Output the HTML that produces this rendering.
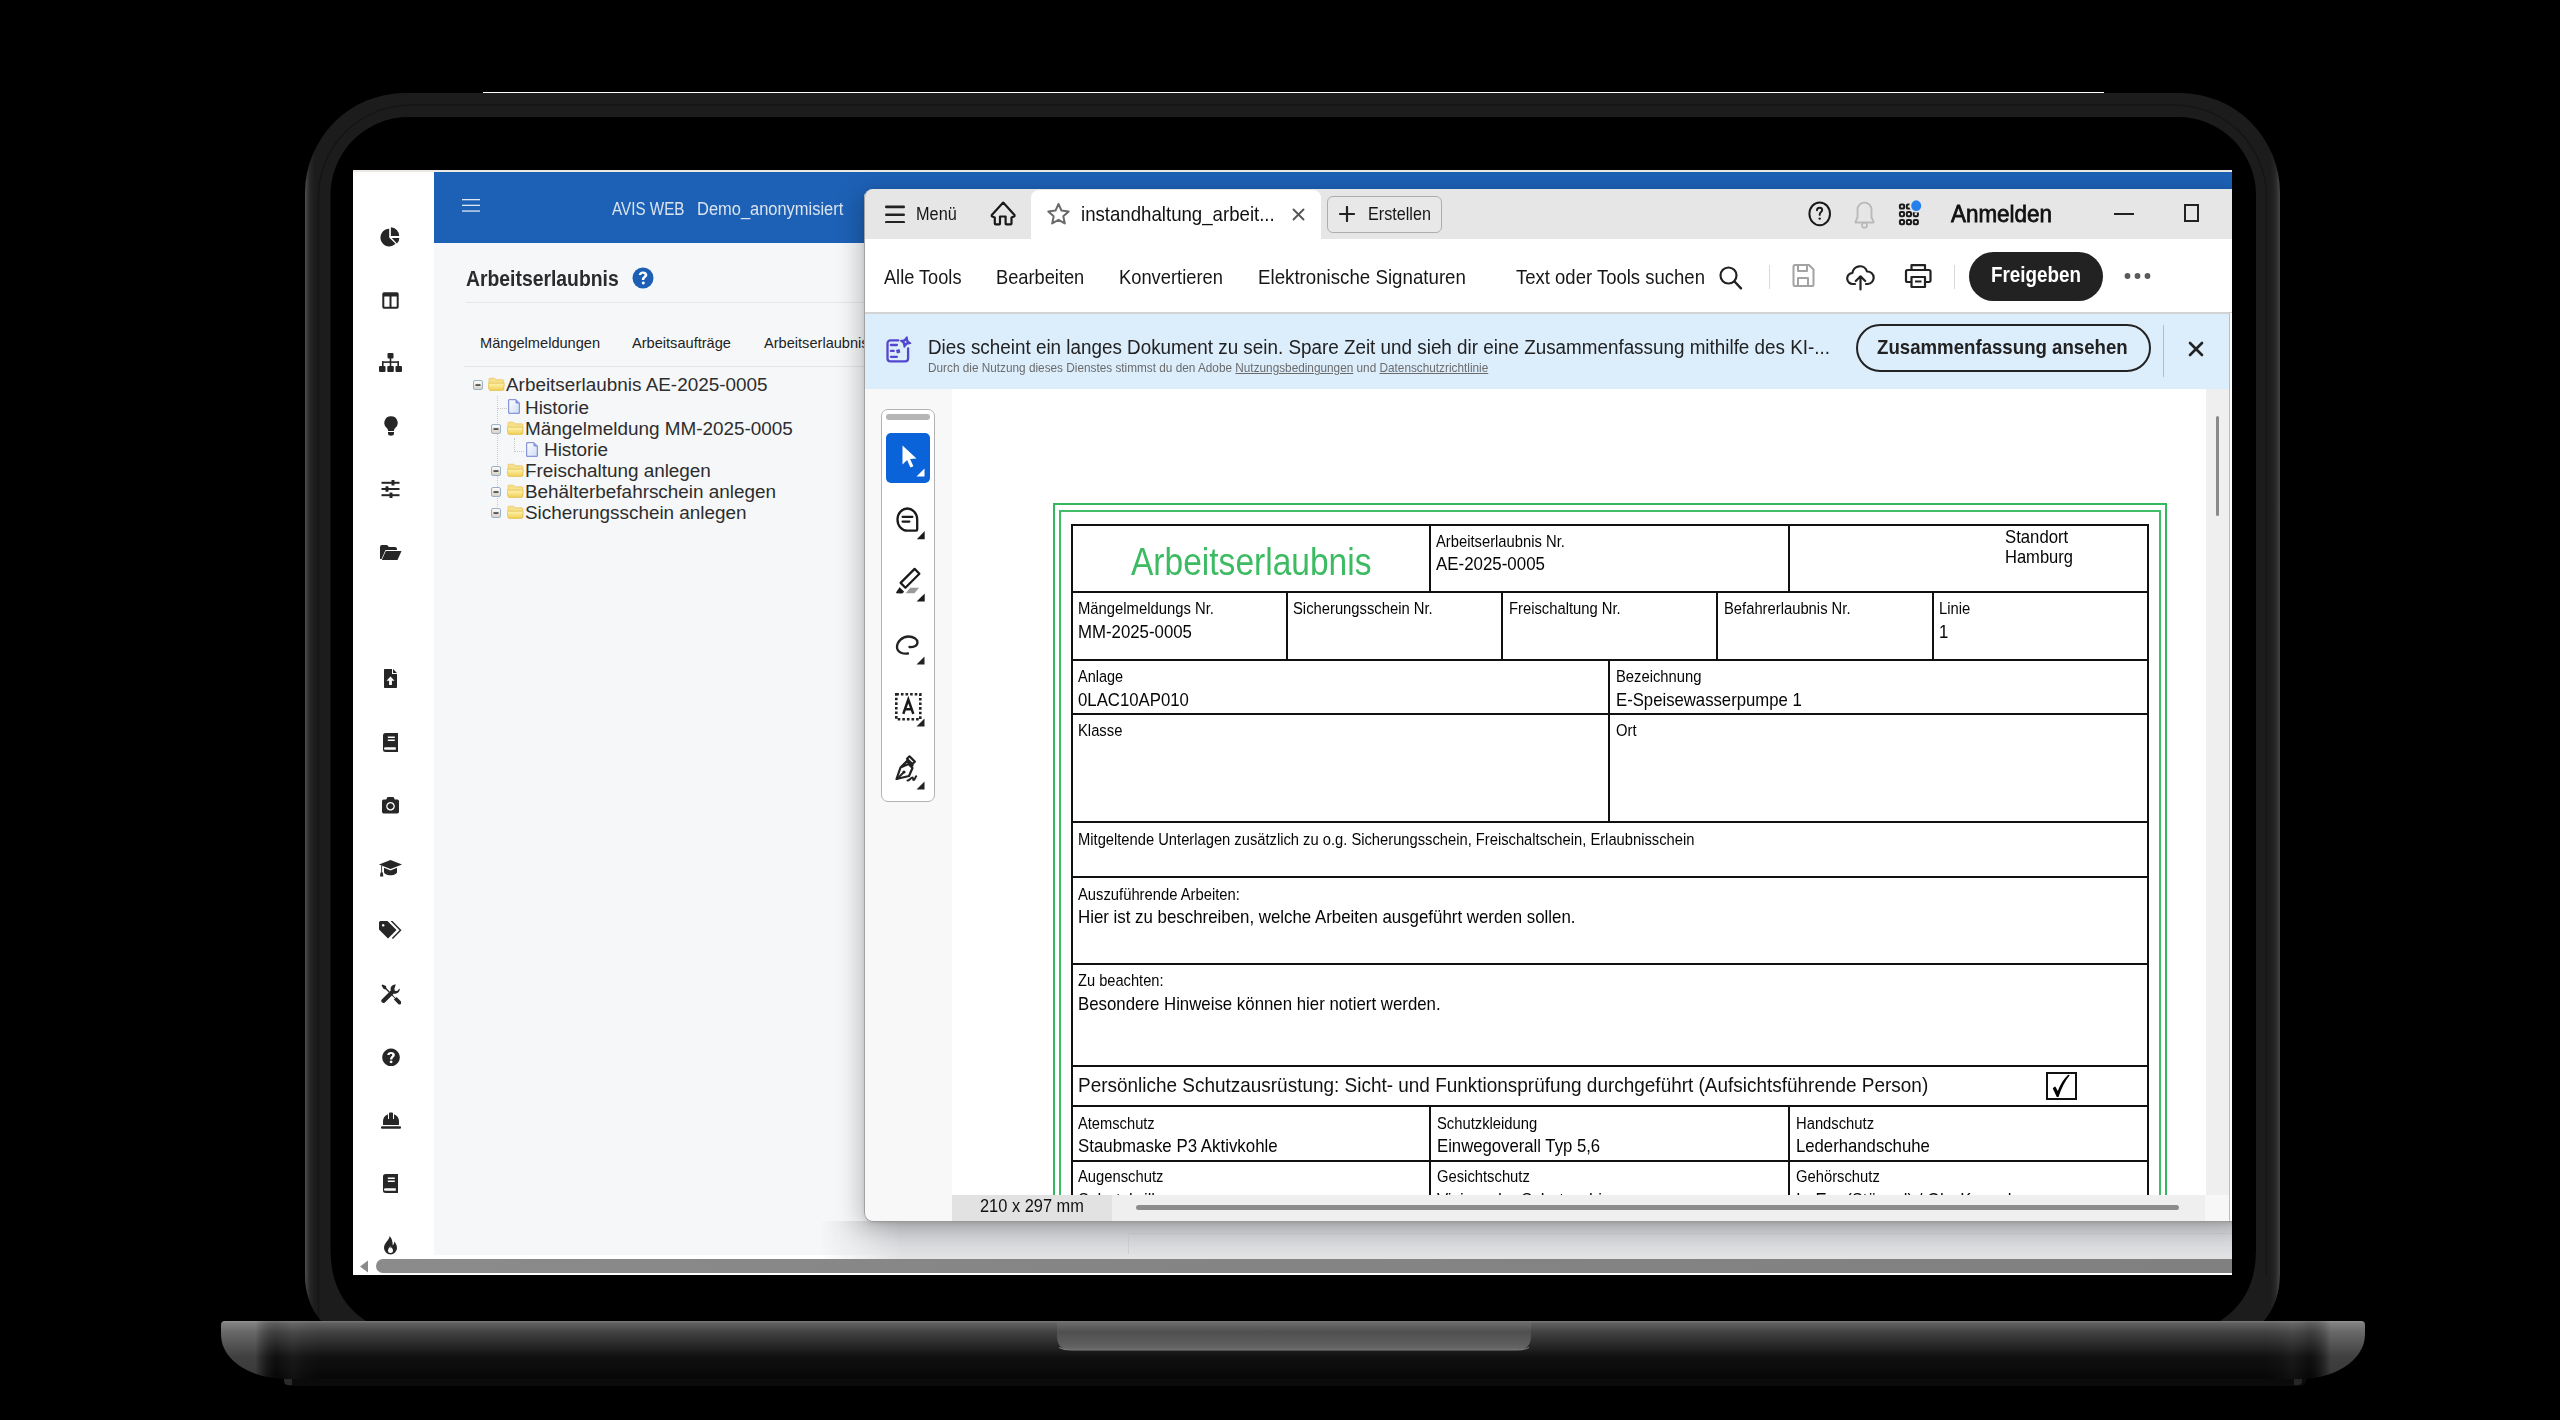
<!DOCTYPE html>
<html><head><meta charset="utf-8">
<style>
*{box-sizing:border-box;margin:0;padding:0}
html,body{width:2560px;height:1420px;overflow:hidden;background:#000}
body{position:relative;font-family:"Liberation Sans",sans-serif;color:#222}
.a{position:absolute}
.t{position:absolute;white-space:nowrap;line-height:1}
/* laptop */
/* screen */
#screen{left:0;top:0;width:2560px;height:1420px;clip-path:inset(170px 328px 145px 353px)}

/* AVIS */
#sidebar{left:353px;top:170px;width:81px;height:1090px;background:#fff}
#hdr{left:434px;top:170px;width:1800px;height:73px;background:#1d61b6}
#pane{left:434px;top:243px;width:1800px;height:1020px;background:#f6f7f9}
.ic{position:absolute;fill:#262626}
#hscroll{left:353px;top:1255px;width:1879px;height:20px;background:#fff}

/* acrobat */
#acro{left:864px;top:189px;width:1380px;height:1032px;border-radius:9px 0 0 9px;background:#fff;overflow:hidden}
.ai{position:absolute;fill:none;stroke:#222;stroke-width:2;stroke-linecap:round;stroke-linejoin:round}
</style></head>
<body>
<svg width="0" height="0" style="position:absolute"><defs>
<linearGradient id="fg" x1="0" y1="0" x2="0" y2="1"><stop offset="0" stop-color="#fff3b0"/><stop offset="1" stop-color="#f2cf55"/></linearGradient>
<linearGradient id="dg" x1="0" y1="0" x2="1" y2="1"><stop offset="0" stop-color="#ffffff"/><stop offset="1" stop-color="#cfdcf5"/></linearGradient>
<linearGradient id="mg" x1="0" y1="0" x2="0" y2="1"><stop offset="0" stop-color="#ffffff"/><stop offset="1" stop-color="#d6d0c4"/></linearGradient>
<symbol id="minus" viewBox="0 0 10 10"><rect x=".5" y=".5" width="9" height="9" rx="1.5" fill="url(#mg)" stroke="#9ab0c4"/><rect x="2.5" y="4.3" width="5" height="1.5" fill="#333"/></symbol>
<symbol id="folder" viewBox="0 0 17 14"><path d="M2 1.2h4.6l1.6 1.6h6.6a1 1 0 0 1 1 1v9H2a1 1 0 0 1-1-1V2.2a1 1 0 0 1 1-1z" fill="#f7e08a" stroke="#e6c25a" stroke-width=".7"/><path d="M.6 6.2H15.6a.6.6 0 0 1 .6.7L15.4 12.6a1 1 0 0 1-1 .8H2.2a1 1 0 0 1-1-.8L.1 6.9a.6.6 0 0 1 .5-.7z" fill="url(#fg)" stroke="#e3bd4e" stroke-width=".7"/></symbol>
<symbol id="doc" viewBox="0 0 12 15"><path d="M.7 .7h7.3l3.3 3.3v10.3H.7z" fill="url(#dg)" stroke="#6f7fcf" stroke-width="1"/><path d="M8 .7v3.3h3.3" fill="#8fa0e0" stroke="#6f7fcf" stroke-width=".8"/></symbol>
</defs></svg>
<svg class="a" style="left:0;top:0" width="2560" height="1420" viewBox="0 0 2560 1420">
<defs>
<linearGradient id="lidg" x1="0" y1="0" x2="1" y2="0">
<stop offset="0" stop-color="#505050"/><stop offset=".001" stop-color="#3c3c3c"/><stop offset=".0025" stop-color="#262626"/><stop offset=".005" stop-color="#1c1c1c"/>
<stop offset=".995" stop-color="#1c1c1c"/><stop offset=".9975" stop-color="#262626"/><stop offset=".999" stop-color="#383838"/><stop offset="1" stop-color="#444"/></linearGradient>
<linearGradient id="baseg" x1="0" y1="0" x2="0" y2="1">
<stop offset="0" stop-color="#7a7a7a"/><stop offset=".04" stop-color="#606060"/><stop offset=".2" stop-color="#414141"/><stop offset=".45" stop-color="#242424"/><stop offset=".62" stop-color="#101010"/><stop offset="1" stop-color="#070707"/></linearGradient>
<linearGradient id="baseh" x1="0" y1="0" x2="1" y2="0">
<stop offset="0" stop-color="#fff" stop-opacity=".2"/><stop offset=".016" stop-color="#fff" stop-opacity=".2"/><stop offset=".026" stop-color="#000" stop-opacity=".05"/><stop offset=".034" stop-color="#fff" stop-opacity=".04"/><stop offset=".05" stop-color="#000" stop-opacity="0"/>
<stop offset=".95" stop-color="#000" stop-opacity="0"/><stop offset=".966" stop-color="#fff" stop-opacity=".04"/><stop offset=".974" stop-color="#000" stop-opacity=".05"/><stop offset=".984" stop-color="#fff" stop-opacity=".2"/><stop offset="1" stop-color="#fff" stop-opacity=".2"/></linearGradient>
<linearGradient id="notchg" x1="0" y1="0" x2="0" y2="1"><stop offset="0" stop-color="#6e6e6e"/><stop offset=".35" stop-color="#4f4f4f"/><stop offset=".8" stop-color="#5e5e5e"/><stop offset="1" stop-color="#6a6a6a"/></linearGradient>
</defs>
<rect x="483" y="92" width="1621" height="1.2" fill="#fff"/>
<path d="M305 1321V193A100 100 0 0 1 405 93H2180A100 100 0 0 1 2280 193V1275Q2280 1302 2264 1321Z" fill="url(#lidg)"/>
<path d="M318.5 1321V199A92 92 0 0 1 410.5 105H2174.5A92 92 0 0 1 2266.5 199V1275" fill="none" stroke="#131313" stroke-width="1.5" opacity=".7"/>
<path d="M305 1275Q305 1302 321 1321" fill="none" stroke="#000" stroke-width="0"/>
<path d="M330.5 1321V195A78 78 0 0 1 408.5 117H2178A78 78 0 0 1 2256 195V1250Q2256 1298 2220 1321H366Q330.5 1298 330.5 1250Z" fill="#000"/>
<path d="M305 1250V1275Q305 1302 321 1321H300V1250Z" fill="#000"/>
<path d="M2280 1250V1275Q2280 1302 2264 1321H2290V1250Z" fill="#000"/>
<path d="M286 1370H2300a6 6 0 0 1 6 6v4a6 6 0 0 1-6 6H290a6 6 0 0 1-6-6z" fill="#0b0b0b"/>
<path d="M284 1372h8v13h-4a4 4 0 0 1-4-4z" fill="#2a2a2a"/>
<path d="M2302 1372h-8v13h4a4 4 0 0 0 4-4z" fill="#262626"/>
<path d="M225 1321H2361Q2365 1321 2365 1325V1334C2365 1362 2332 1379 2300 1379H286C254 1379 221 1362 221 1334V1325Q221 1321 225 1321Z" fill="url(#baseg)"/>
<path d="M225 1321H2361Q2365 1321 2365 1325V1334C2365 1362 2332 1379 2300 1379H286C254 1379 221 1362 221 1334V1325Q221 1321 225 1321Z" fill="url(#baseh)"/>
<path d="M1057 1322H1531V1336Q1531 1350 1517 1350H1071Q1057 1350 1057 1336Z" fill="url(#notchg)"/>
<path d="M1059 1347.5Q1064 1350 1071 1350H1517Q1524 1350 1529 1347.5" fill="none" stroke="#7a7a7a" stroke-width="1.2"/>
</svg>

<div id="screen" class="a">

<div id="sidebar" class="a"></div>
<div id="hdr" class="a"></div>
<div id="pane" class="a"></div>
<!-- sidebar icons -->
<svg class="ic" style="left:376px;top:222px" width="30" height="30" viewBox="0 0 30 30"><path d="M13.2 15.6V6.8A8.8 8.8 0 1 0 19.5 21.8Z"/><path d="M14.9 13.9V5.2A8.7 8.7 0 0 1 23.2 13.9Z"/><path d="M15.8 15.9H23.3A8 8 0 0 1 21 21.5Z"/></svg>
<svg class="ic" style="left:382px;top:291.5px" width="17" height="17" viewBox="0 0 17 17"><path d="M2 0.3h13A1.7 1.7 0 0 1 16.7 2v13A1.7 1.7 0 0 1 15 16.7H2A1.7 1.7 0 0 1 .3 15V2A1.7 1.7 0 0 1 2 .3z M2.3 4.6v10.1h5.2V4.6z M9.5 4.6v10.1h5.2V4.6z" fill-rule="evenodd"/></svg>
<svg class="ic" style="left:379px;top:353px" width="23" height="20" viewBox="0 0 23 20"><rect x="8.5" y="0" width="6" height="5.5" rx="1"/><rect x="10.7" y="5" width="1.6" height="4"/><rect x="3" y="8.3" width="17" height="1.6"/><rect x="3" y="8.3" width="1.6" height="5"/><rect x="18.4" y="8.3" width="1.6" height="5"/><rect x="10.7" y="8.3" width="1.6" height="5"/><rect x="0" y="13" width="6.5" height="6" rx="1"/><rect x="8.3" y="13" width="6.5" height="6" rx="1"/><rect x="16.5" y="13" width="6.5" height="6" rx="1"/></svg>
<svg class="ic" style="left:384px;top:416px" width="14" height="20" viewBox="0 0 14 20"><path d="M7 0.3A6.6 6.6 0 0 0 3 12.2c.6.6 1 1.5 1 2.3V15h6v-.5c0-.8.4-1.7 1-2.3A6.6 6.6 0 0 0 7 .3z"/><path d="M4 16h6v1.5c0 1.3-1.3 2.3-3 2.3s-3-1-3-2.3z"/></svg>
<svg class="ic" style="left:381px;top:480px" width="19" height="18" viewBox="0 0 19 18"><rect x="0.5" y="1.8" width="18" height="2"/><rect x="0.5" y="8" width="18" height="2"/><rect x="0.5" y="14.2" width="18" height="2"/><rect x="10.5" y="0" width="3" height="5.6" rx=".6"/><rect x="4.5" y="6.2" width="3" height="5.6" rx=".6"/><rect x="8.5" y="12.4" width="3" height="5.6" rx=".6"/></svg>
<svg class="ic" style="left:380px;top:545px" width="22" height="15" viewBox="0 0 22 15"><path d="M0 2a2 2 0 0 1 2-2h5l2 2h6a2 2 0 0 1 2 2v1H5.5L1.5 14H0z"/><path d="M5.8 6H21.5l-4 9H1.8z"/></svg>
<svg class="ic" style="left:384px;top:669px" width="13" height="19" viewBox="0 0 13 19"><path d="M0 .8A.8.8 0 0 1 .8 0H8v5h5v13.2a.8.8 0 0 1-.8.8H.8a.8.8 0 0 1-.8-.8z M9 0l4 4H9z M6.5 7.5l-4 4.2h2.6V16h2.8v-4.3h2.6z" fill-rule="evenodd"/></svg>
<svg class="ic" style="left:383px;top:732.5px" width="15" height="19" viewBox="0 0 15 19"><path d="M2.5 0H15v19H2.5A2.5 2.5 0 0 1 0 16.5v-14A2.5 2.5 0 0 1 2.5 0z M2.3 14.2a1.2 1.2 0 0 0 0 2.6h10.5v-2.6z M4.8 3.4v1.5h7V3.4z M4.8 6.4v1.5h7V6.4z" fill-rule="evenodd"/></svg>
<svg class="ic" style="left:382px;top:797px" width="17" height="16.5" viewBox="0 0 17 16.5"><path d="M5.5 0h6l1.3 2.5H15.3A1.7 1.7 0 0 1 17 4.2v10.6a1.7 1.7 0 0 1-1.7 1.7H1.7A1.7 1.7 0 0 1 0 14.8V4.2A1.7 1.7 0 0 1 1.7 2.5h2.5z M8.5 5a4.3 4.3 0 1 0 .01 0z M8.5 6.3a3 3 0 1 1-.01 0z" fill-rule="evenodd"/></svg>
<svg class="ic" style="left:379px;top:860px" width="23" height="17" viewBox="0 0 23 17"><path d="M11.5 0L23 4.5l-11.5 4.5L0 4.5z"/><path d="M5 7.8v4.2c0 1.8 3 3.2 6.5 3.2s6.5-1.4 6.5-3.2V7.8l-6.5 2.6z"/><path d="M2.2 5.5h.9v7.5h-.9z"/><path d="M1.5 12.5h2.3l.5 4h-3.3z"/></svg>
<svg class="ic" style="left:379px;top:921px" width="23" height="21" viewBox="0 0 23 21"><path d="M0 1.5A1.5 1.5 0 0 1 1.5 0h7l9 9-8.5 8.5-9-9z M4.2 3a1.3 1.3 0 1 0 0.01 0z" fill-rule="evenodd"/><path d="M11.5 0h2l9 9.3-8.6 8.6-1-1 7.6-7.6z"/></svg>
<svg class="ic" style="left:381px;top:984px" width="20" height="21" viewBox="0 0 20 21"><path d="M1.5 0.5L0.5 1.5l2.2 3.6 2 .3 9.2 9.2-1 1 4.3 4.3a1.8 1.8 0 0 0 2.6-2.6l-4.3-4.3-1 1L5.3 3.9 5 2z"/><path d="M14.8 0.6a4.5 4.5 0 0 0-5 5.8L0.8 15.4a2.2 2.2 0 0 0 3.1 3.1l9-9a4.5 4.5 0 0 0 5.8-5l-2.6 2.6-2.4-.3-.3-2.4z"/></svg>
<svg class="ic" style="left:382px;top:1048px" width="18" height="19" viewBox="0 0 18 19"><path d="M9 0.5a8.8 8.8 0 1 0 0.01 0z M9 4c-2.1 0-3.6 1.2-3.8 3.1h2.4c.1-.7.6-1.1 1.4-1.1.8 0 1.3.5 1.3 1.1 0 1.3-2.2 1.4-2.2 3.8v.5h2.3v-.3c0-1.7 2.5-1.9 2.5-4.1C12.9 5.1 11.2 4 9 4z M9.1 12.5a1.4 1.4 0 1 0 0.01 0z" fill-rule="evenodd"/></svg>
<svg class="ic" style="left:381px;top:1112px" width="20" height="17" viewBox="0 0 20 17"><path d="M8 1.5v5.5H7V2.2A7.8 7.8 0 0 0 2 9.5V13h16V9.5a7.8 7.8 0 0 0-5-7.3V7h-1V1.5a1 1 0 0 0-1-1H9a1 1 0 0 0-1 1z"/><rect x="0" y="14.3" width="20" height="2.4" rx="1"/></svg>
<svg class="ic" style="left:383px;top:1174px" width="15" height="19" viewBox="0 0 15 19"><path d="M2.5 0H15v19H2.5A2.5 2.5 0 0 1 0 16.5v-14A2.5 2.5 0 0 1 2.5 0z M2.3 14.2a1.2 1.2 0 0 0 0 2.6h10.5v-2.6z M4.8 3.4v1.5h7V3.4z M4.8 6.4v1.5h7V6.4z" fill-rule="evenodd"/></svg>
<svg class="ic" style="left:383px;top:1236px" width="15" height="19" viewBox="0 0 15 19"><path d="M6.5 0C7 3.5 1 6.5 1 12a6.5 6.5 0 0 0 13 0c0-3-1.5-5.2-3-6.5.2 2-.3 3.3-1.3 3.8C9.8 5.5 8.8 2 6.5 0z M7.5 10c-.6 1.5-2.5 2.5-2.5 4.5a2.5 2.5 0 0 0 5 0c0-1.5-1-2.5-1.4-3.3-.3.7-.7 1-1.1 1.1z" fill-rule="evenodd"/></svg>
<!-- header -->
<svg class="a" style="left:462px;top:198px" width="18" height="15" viewBox="0 0 18 15"><rect x="0" y="1" width="18" height="1.3" fill="#dfe7f3"/><rect x="0" y="6.7" width="18" height="1.3" fill="#dfe7f3"/><rect x="0" y="12.4" width="18" height="1.3" fill="#dfe7f3"/></svg>
<div class="t" style="left:612px;top:201px;font-size:17.5px;color:#dbe3ee;transform:scaleX(.87);transform-origin:0 0">AVIS WEB</div>
<div class="t" style="left:697px;top:201px;font-size:17.5px;color:#dbe3ee;transform:scaleX(.94);transform-origin:0 0">Demo_anonymisiert</div>
<!-- pane -->
<div class="t" style="left:466px;top:269px;font-size:21.5px;font-weight:bold;color:#2b2b2b;transform:scaleX(.9);transform-origin:0 0">Arbeitserlaubnis</div>
<svg class="a" style="left:632px;top:267px" width="22" height="22" viewBox="0 0 22 22"><circle cx="11" cy="11" r="10.5" fill="#1c5fb5"/><path d="M11 4.5c-2.4 0-4 1.4-4.2 3.5h2.5c.1-.8.7-1.3 1.6-1.3 1 0 1.6.6 1.6 1.3 0 1.5-2.6 1.7-2.6 4.4v.6h2.5v-.4c0-1.9 2.9-2.2 2.9-4.7 0-2.1-1.8-3.4-4.3-3.4z M11.3 14.6a1.5 1.5 0 1 0 .01 0z" fill="#fff" fill-rule="evenodd"/></svg>
<div class="a" style="left:466px;top:302px;width:400px;height:1px;background:#e6e7ea"></div>
<div class="t" style="left:480px;top:336px;font-size:14.6px;color:#222">Mängelmeldungen</div>
<div class="t" style="left:632px;top:336px;font-size:14.6px;color:#222">Arbeitsaufträge</div>
<div class="t" style="left:764px;top:336px;font-size:14.6px;color:#222">Arbeitserlaubnis</div>
<div class="a" style="left:464px;top:366px;width:400px;height:1px;background:#e3e4e7"></div>

<div class="a" style="left:353px;top:170px;width:1879px;height:2px;background:#ece9e5"></div>
<!-- below-window background bits -->
<div class="a" style="left:353px;top:1255px;width:1879px;height:20px;background:#fff"></div>
<div class="a" style="left:820px;top:1221px;width:1412px;height:38px;background:linear-gradient(#c6c7ca,#d5d6d9 45%,#dfe0e2 85%,#e3e3e5);-webkit-mask-image:linear-gradient(90deg,transparent 0,#000 80px)"></div>
<div class="a" style="left:1128px;top:1233px;width:1110px;height:1px;background:#c9cacd"></div>
<div class="a" style="left:1128px;top:1233px;width:1px;height:21px;background:#cdcecf"></div>
<div class="a" style="left:864px;top:189px;width:1380px;height:1033px;border-radius:9px 0 0 9px;box-shadow:-5px 4px 24px rgba(0,0,0,.22), 0 1px 4px rgba(0,0,0,.1)"></div>
<div id="acro" class="a">
<div class="a" style="left:0.0px;top:0.0px;width:1380.0px;height:50.0px;background:#e6e6e6"></div>
<div class="a" style="left:166.5px;top:0.5px;width:290.0px;height:49.5px;background:#fff;border-radius:8px 8px 0 0"></div>
<svg class="a" style="left:21.0px;top:16.0px;" width="20" height="18" viewBox="0 0 20 18"><g fill="#222"><rect x="0" y="0.6" width="20" height="2.6" rx="1.3"/><rect x="0" y="8.4" width="20" height="2.6" rx="1.3"/><rect x="0" y="16.1" width="20" height="2.6" rx="1.3"/></g></svg>
<div class="t" style="left:52.4px;top:15.0px;font-size:19.14px;color:#161616;transform:scaleX(0.8520);transform-origin:0 0;">Menü</div>
<svg class="a" style="left:116.0px;top:6.0px;" width="40" height="40" viewBox="0 0 40 40"><path d="M23.2 7.6L11.8 19.9Q11.3 20.9 12.3 21.6L14.8 22.6V28.5Q14.8 29.4 15.7 29.4H19.3Q20 29.4 20 28.6V21.5H25.6V28.6Q25.6 29.4 26.3 29.4H30.6Q31.5 29.4 31.5 28.5V22.6L34 21.6Q35 20.9 34.5 19.9Z" fill="none" stroke="#1a1a1a" stroke-width="2.2" stroke-linejoin="round"/></svg>
<svg class="a" style="left:182.0px;top:13.0px;" width="25" height="24" viewBox="0 0 25 24"><path d="M12.5 2l3 6.6 7.2.8-5.4 4.9 1.5 7.1-6.3-3.6-6.3 3.6 1.5-7.1-5.4-4.9 7.2-.8z" fill="none" stroke="#6a6a6a" stroke-width="2" stroke-linejoin="round"/></svg>
<div class="t" style="left:216.7px;top:14.8px;font-size:20.86px;color:#111;transform:scaleX(0.8933);transform-origin:0 0;">instandhaltung_arbeit...</div>
<svg class="a" style="left:428.0px;top:19.0px;" width="13" height="13" viewBox="0 0 13 13"><path d="M1.5 1.5l10 10M11.5 1.5l-10 10" stroke="#555" stroke-width="1.9" stroke-linecap="round"/></svg>
<div class="a" style="left:462.5px;top:7.0px;width:115.0px;height:36.5px;border:1.6px solid #adadad;border-radius:6px;background:#e8e8e8"></div>
<svg class="a" style="left:475.0px;top:17.0px;" width="16" height="16" viewBox="0 0 16 16"><path d="M8 1v14M1 8h14" stroke="#222" stroke-width="2.2" stroke-linecap="round"/></svg>
<div class="t" style="left:504.4px;top:15.0px;font-size:19.14px;color:#161616;transform:scaleX(0.8459);transform-origin:0 0;">Erstellen</div>
<svg class="a" style="left:942.0px;top:10.0px;" width="28" height="30" viewBox="0 0 28 30"><ellipse cx="13.7" cy="14.8" rx="10.3" ry="11.4" fill="none" stroke="#1a1a1a" stroke-width="2"/><path d="M11 11.3c0-1.6 1.1-2.6 2.6-2.6s2.6 1 2.6 2.4c0 1.9-2.5 2-2.5 4.3v.5" fill="none" stroke="#1a1a1a" stroke-width="1.9" stroke-linecap="round"/><circle cx="13.7" cy="19.6" r="1.2" fill="#1a1a1a"/></svg>
<svg class="a" style="left:988.0px;top:11.0px;" width="25" height="30" viewBox="0 0 25 30"><path d="M3.5 22.5H21.5V21.6L19.5 17.5V9.6A7 7 0 0 0 5.5 9.6V17.5L3.5 21.6Z" fill="none" stroke="#bababa" stroke-width="1.9" stroke-linejoin="round"/><circle cx="12.5" cy="25.2" r="2.5" fill="none" stroke="#bababa" stroke-width="1.7"/></svg>
<svg class="a" style="left:1033.0px;top:10.0px;" width="28" height="30" viewBox="0 0 28 30"><g fill="none" stroke="#1a1a1a" stroke-width="2"><rect x="2.9" y="5.4" width="4.2" height="4.2" rx="1.2"/><rect x="2.9" y="13.0" width="4.2" height="4.2" rx="1.2"/><rect x="2.9" y="21.1" width="4.2" height="4.2" rx="1.2"/><rect x="9.8" y="5.4" width="4.2" height="4.2" rx="1.2"/><rect x="9.8" y="13.0" width="4.2" height="4.2" rx="1.2"/><rect x="9.8" y="21.1" width="4.2" height="4.2" rx="1.2"/><rect x="16.7" y="13.0" width="4.2" height="4.2" rx="1.2"/><rect x="16.7" y="21.1" width="4.2" height="4.2" rx="1.2"/></g><circle cx="19.2" cy="6.7" r="7" fill="#e6e6e6"/><ellipse cx="19.2" cy="6.7" rx="5" ry="5.4" fill="#2680eb"/></svg>
<div class="t" style="left:1087.4px;top:12.7px;font-size:24.57px;color:#111;transform:scaleX(0.9128);transform-origin:0 0;-webkit-text-stroke:0.8px #111;">Anmelden</div>
<div class="a" style="left:1250.0px;top:24.0px;width:20.0px;height:2.2px;background:#222"></div>
<div class="a" style="left:1319.6px;top:15.4px;width:15.4px;height:18.0px;border:2px solid #222"></div>
<div class="a" style="left:0.0px;top:50.0px;width:1380.0px;height:73.0px;background:#fff"></div>
<div class="a" style="left:0.0px;top:122.5px;width:1380.0px;height:2.0px;background:#d3d3d3"></div>
<div class="t" style="left:20.3px;top:77.6px;font-size:20.43px;color:#161616;transform:scaleX(0.8901);transform-origin:0 0;">Alle Tools</div>
<div class="t" style="left:132.3px;top:77.6px;font-size:20.43px;color:#161616;transform:scaleX(0.8936);transform-origin:0 0;">Bearbeiten</div>
<div class="t" style="left:255.0px;top:77.6px;font-size:20.43px;color:#161616;transform:scaleX(0.8978);transform-origin:0 0;">Konvertieren</div>
<div class="t" style="left:393.6px;top:77.6px;font-size:20.43px;color:#161616;transform:scaleX(0.9158);transform-origin:0 0;">Elektronische Signaturen</div>
<div class="t" style="left:652.2px;top:77.6px;font-size:20.43px;color:#161616;transform:scaleX(0.9061);transform-origin:0 0;">Text oder Tools suchen</div>
<svg class="a" style="left:854.0px;top:76.0px;" width="26" height="26" viewBox="0 0 26 26"><circle cx="10.5" cy="10.5" r="8" fill="none" stroke="#222" stroke-width="2.2"/><path d="M16.5 16.5l6.5 6.8" stroke="#222" stroke-width="2.4" stroke-linecap="round"/></svg>
<div class="a" style="left:905.0px;top:75.5px;width:1.2px;height:24.0px;background:#d9d9d9"></div>
<svg class="a" style="left:927.0px;top:74.0px;" width="26" height="26" viewBox="0 0 26 26"><path d="M2.5 3.5a1.5 1.5 0 0 1 1.5-1.5h14l4.5 4.5v15a1.5 1.5 0 0 1-1.5 1.5H4a1.5 1.5 0 0 1-1.5-1.5z M7 2v6h9V2 M7 23v-8h10v8" fill="none" stroke="#a3a3a3" stroke-width="2" stroke-linejoin="round"/></svg>
<svg class="a" style="left:982.0px;top:74.0px;" width="30" height="29" viewBox="0 0 30 29"><path d="M9 21H7a5.5 5.5 0 0 1-.6-11A7.5 7.5 0 0 1 21 8.5a6.2 6.2 0 0 1 .8 12.5H20 M14.5 26.5V13.5 M9.8 18l4.7-4.7 4.7 4.7" fill="none" stroke="#222" stroke-width="2.2" stroke-linejoin="round" stroke-linecap="round"/></svg>
<svg class="a" style="left:1040.0px;top:73.0px;" width="29" height="28" viewBox="0 0 29 28"><path d="M7.5 8V3.2h13.5V8 M7 20H3.5a1.5 1.5 0 0 1-1.5-1.5v-9A1.5 1.5 0 0 1 3.5 8h21.5a1.5 1.5 0 0 1 1.5 1.5v9A1.5 1.5 0 0 1 25 20h-3.5 M7.5 15h13.5v10H7.5z M11 19.5h6.5" fill="none" stroke="#222" stroke-width="2.2" stroke-linejoin="round"/></svg>
<div class="a" style="left:1089.5px;top:75.5px;width:1.2px;height:24.0px;background:#d9d9d9"></div>
<div class="a" style="left:1104.5px;top:63.0px;width:134.2px;height:49.3px;background:#222;border-radius:25px"></div>
<div class="t" style="left:1126.7px;top:76.0px;font-size:21.43px;font-weight:bold;color:#fff;transform:scaleX(0.8789);transform-origin:0 0;">Freigeben</div>
<svg class="a" style="left:1259.0px;top:82.0px;" width="30" height="10" viewBox="0 0 30 10"><g fill="#5a5a5a"><circle cx="4.5" cy="5" r="2.9"/><circle cx="14.5" cy="5" r="2.9"/><circle cx="24.5" cy="5" r="2.9"/></g></svg>
<div class="a" style="left:0.0px;top:124.5px;width:1380.0px;height:75.5px;background:#dcedfc"></div>
<svg class="a" style="left:14.0px;top:139.0px;" width="40" height="40" viewBox="0 0 40 40"><path d="M20.3 12.4H12.4A2.9 2.9 0 0 0 9.5 15.3V30.5A2.9 2.9 0 0 0 12.4 33.4H27.2A2.9 2.9 0 0 0 30.1 30.5V20.3" fill="none" stroke="#5447cf" stroke-width="2.3" stroke-linecap="round"/><path d="M12.9 17H18.9M12.9 22.9H15.7M12.9 28.8H18.9" stroke="#5447cf" stroke-width="2.3" stroke-linecap="round"/><rect x="18.4" y="21.4" width="3.6" height="3.6" transform="rotate(-15 20.2 23.2)" fill="#5447cf"/><path d="M28.92 9.07 L29.59 12.85 L32.53 15.32 L28.75 15.99 L26.28 18.93 L25.61 15.15 L22.67 12.68 L26.45 12.01Z" fill="#5447cf" stroke="#5447cf" stroke-width="1.6" stroke-linejoin="round"/><circle cx="27.6" cy="13.9" r="0.9" fill="#dcedfc"/></svg>
<div class="t" style="left:63.8px;top:147.8px;font-size:20.00px;color:#222;transform:scaleX(0.9424);transform-origin:0 0;">Dies scheint ein langes Dokument zu sein. Spare Zeit und sieh dir eine Zusammenfassung mithilfe des KI-...</div>
<div class="t" style="left:63.8px;top:172.2px;font-size:13.43px;color:#6b6b6b;transform:scaleX(0.8782);transform-origin:0 0;">Durch die Nutzung dieses Dienstes stimmst du den Adobe <u>Nutzungsbedingungen</u> und <u>Datenschutzrichtlinie</u></div>
<div class="a" style="left:992.0px;top:135.3px;width:294.5px;height:48.2px;border:2.6px solid #222;border-radius:25px"></div>
<div class="t" style="left:1013.0px;top:148.1px;font-size:20.86px;font-weight:bold;color:#222;transform:scaleX(0.8938);transform-origin:0 0;">Zusammenfassung ansehen</div>
<div class="a" style="left:1298.5px;top:136.0px;width:1.2px;height:51.6px;background:#aebdca"></div>
<svg class="a" style="left:1324.0px;top:152.0px;" width="16" height="16" viewBox="0 0 16 16"><path d="M2 2l12 12M14 2L2 14" stroke="#222" stroke-width="2.6" stroke-linecap="round"/></svg>
<div class="a" style="left:0.0px;top:200.0px;width:88.0px;height:805.5px;background:#f8f8f8"></div>
<div class="a" style="left:88.0px;top:200.0px;width:1254.0px;height:805.5px;background:#fff"></div>
<div class="a" style="left:1342.0px;top:200.0px;width:38.0px;height:805.5px;background:#efefef"></div>
<div class="a" style="left:1351.5px;top:227.0px;width:3.8px;height:100.0px;background:#8a8a8a;border-radius:2px"></div>
<div class="a" style="left:0.0px;top:1005.5px;width:1380.0px;height:27.0px;background:#efefef"></div>
<div class="a" style="left:0.0px;top:1005.5px;width:88.0px;height:27.0px;background:#f8f8f8"></div>
<div class="a" style="left:88.0px;top:1005.5px;width:159.5px;height:27.0px;background:#e2e2e2"></div>
<div class="a" style="left:1341.0px;top:1005.5px;width:39.0px;height:27.0px;background:#f7f7f7"></div>
<div class="a" style="left:272.0px;top:1016.0px;width:1043.0px;height:5.0px;background:#8c8c8c;border-radius:3px"></div>
<div class="t" style="left:116.0px;top:1008.7px;font-size:17.43px;color:#111;transform:scaleX(0.9417);transform-origin:0 0;">210 x 297 mm</div>
<div class="a" style="left:16.8px;top:219.5px;width:54.0px;height:393.0px;background:#fff;border:1.5px solid #b3b3b3;border-radius:7px"></div>
<div class="a" style="left:21.8px;top:225.2px;width:44.2px;height:6.0px;background:#b5b5b5;border-radius:3px"></div>
<div class="a" style="left:21.8px;top:243.8px;width:44.2px;height:50.2px;background:#0b63d9;border-radius:5px"></div>
<svg class="a" style="left:36.0px;top:255.0px;" width="18" height="26" viewBox="0 0 18 26"><path d="M2.5 1.5v19l4.6-4.4 3.3 7.5 3-1.3-3.3-7.4 6.4-.4z" fill="#fff"/></svg>
<svg class="a" style="left:52.2px;top:279.0px;" width="9" height="9" viewBox="0 0 9 9"><path d="M8.5 .5v8h-8z" fill="#fff"/></svg>
<svg class="a" style="left:21.0px;top:306.0px;" width="50" height="115" viewBox="0 0 50 115"><path d="M32.2 24.5A9.85 11.1 0 1 0 22.35 35.7H31a1.2 1.2 0 0 0 1.2-1.2Z" fill="none" stroke="#1a1a1a" stroke-width="2.3" stroke-linejoin="round"/><path d="M17.6 21.8H27.4M17.6 26.6H24.4" stroke="#1a1a1a" stroke-width="2.3" stroke-linecap="round"/><path d="M39.7 36V44.2H31.8Z" fill="#1a1a1a"/><path d="M29.6 73.9L34.4 78.7L20.4 92.7L15.6 87.9Z" fill="none" stroke="#1a1a1a" stroke-width="2.2" stroke-linejoin="round"/><path d="M11.2 98.3Q11 97.6 11.6 96.6L14.6 92.2L19 96.6Q18.4 98.4 17 98.4Z" fill="#1a1a1a"/><path d="M20.7 98.2L25.2 92.8H34L29.5 98.2Z" fill="#9a9a9a"/><path d="M39.7 98.5V106.6H31.6Z" fill="#1a1a1a"/></svg>
<svg class="a" style="left:30.0px;top:444.0px;" width="28" height="24" viewBox="0 0 28 24"><path d="M14 20.5C10 21 3 20 3 14c0-5 5-10.5 11.5-10.5 5 0 9 2.5 9 6S19 14.5 15.5 14" fill="none" stroke="#222" stroke-width="2.3" stroke-linecap="round"/></svg>
<svg class="a" style="left:52.2px;top:466.5px;" width="9" height="9" viewBox="0 0 9 9"><path d="M8.5 .5v8h-8z" fill="#222"/></svg>
<svg class="a" style="left:29.0px;top:502.0px;" width="30" height="32" viewBox="0 0 30 32"><rect x="3.3" y="3.3" width="24" height="25" fill="none" stroke="#222" stroke-width="2.6" stroke-dasharray="2.6 2"/><path d="M10.3 22.8l5-14.2 5 14.2 M12 18.2h6.6" fill="none" stroke="#1a1a1a" stroke-width="2.5"/></svg>
<svg class="a" style="left:52.2px;top:529.0px;" width="9" height="9" viewBox="0 0 9 9"><path d="M8.5 .5v8h-8z" fill="#222"/></svg>
<svg class="a" style="left:29.0px;top:566.0px;" width="30" height="32" viewBox="0 0 30 32"><path d="M3.5 24l4-11.5 8-3.5 4 4-3.5 8z M7.5 12.5l7-7 5 5-1 1" fill="none" stroke="#222" stroke-width="2.2" stroke-linejoin="round"/><path d="M14 3.8l2.5-2.5 5.3 5.3-2.5 2.5z" fill="none" stroke="#222" stroke-width="2.2" stroke-linejoin="round"/><path d="M4 24l6.5-6.5" stroke="#222" stroke-width="1.8"/><circle cx="11" cy="17" r="1.6" fill="#222"/><path d="M14.5 25.5c2 0 3.3-3 5-3 1 0 0 2.5 1.2 2.5 1 0 1.5-2.5 2.5-3.8" fill="none" stroke="#222" stroke-width="2" stroke-linecap="round"/></svg>
<svg class="a" style="left:52.2px;top:592.0px;" width="9" height="9" viewBox="0 0 9 9"><path d="M8.5 .5v8h-8z" fill="#222"/></svg>
<div class="a" style="left:188.6px;top:313.9px;width:1114.2px;height:797.1px;border:2.2px solid #33b85e"></div>
<div class="a" style="left:194.8px;top:320.8px;width:1102.1px;height:790.2px;border:2px solid #40bd67"></div>
<div class="a" style="left:207.0px;top:334.7px;width:1078.0px;height:2.0px;background:#111"></div>
<div class="a" style="left:207.0px;top:401.8px;width:1078.0px;height:2.0px;background:#111"></div>
<div class="a" style="left:207.0px;top:469.5px;width:1078.0px;height:2.0px;background:#111"></div>
<div class="a" style="left:207.0px;top:523.9px;width:1078.0px;height:2.0px;background:#111"></div>
<div class="a" style="left:207.0px;top:632.4px;width:1078.0px;height:2.0px;background:#111"></div>
<div class="a" style="left:207.0px;top:686.5px;width:1078.0px;height:2.0px;background:#111"></div>
<div class="a" style="left:207.0px;top:774.3px;width:1078.0px;height:2.0px;background:#111"></div>
<div class="a" style="left:207.0px;top:875.8px;width:1078.0px;height:2.0px;background:#111"></div>
<div class="a" style="left:207.0px;top:916.0px;width:1078.0px;height:2.0px;background:#111"></div>
<div class="a" style="left:207.0px;top:971.0px;width:1078.0px;height:2.0px;background:#111"></div>
<div class="a" style="left:207.0px;top:334.7px;width:2.0px;height:726.3px;background:#111"></div>
<div class="a" style="left:1283.0px;top:334.7px;width:2.0px;height:726.3px;background:#111"></div>
<div class="a" style="left:565.3px;top:335.7px;width:2.0px;height:67.1px;background:#111"></div>
<div class="a" style="left:924.2px;top:335.7px;width:2.0px;height:67.1px;background:#111"></div>
<div class="a" style="left:421.6px;top:402.8px;width:2.0px;height:67.7px;background:#111"></div>
<div class="a" style="left:637.2px;top:402.8px;width:2.0px;height:67.7px;background:#111"></div>
<div class="a" style="left:852.0px;top:402.8px;width:2.0px;height:67.7px;background:#111"></div>
<div class="a" style="left:1067.5px;top:402.8px;width:2.0px;height:67.7px;background:#111"></div>
<div class="a" style="left:744.4px;top:470.5px;width:2.0px;height:162.9px;background:#111"></div>
<div class="a" style="left:565.3px;top:917.0px;width:2.0px;height:144.0px;background:#111"></div>
<div class="a" style="left:924.3px;top:917.0px;width:2.0px;height:144.0px;background:#111"></div>
<div class="t" style="left:266.5px;top:354.2px;font-size:38.00px;color:#3dbb63;transform:scaleX(0.8826);transform-origin:0 0;">Arbeitserlaubnis</div>
<div class="t" style="left:572.3px;top:344.0px;font-size:17.14px;color:#050505;transform:scaleX(0.8623);transform-origin:0 0;">Arbeitserlaubnis Nr.</div>
<div class="t" style="left:572.3px;top:366.2px;font-size:18.57px;color:#050505;transform:scaleX(0.9100);transform-origin:0 0;">AE-2025-0005</div>
<div class="t" style="left:1141.0px;top:339.0px;font-size:18.57px;color:#050505;transform:scaleX(0.9016);transform-origin:0 0;">Standort</div>
<div class="t" style="left:1141.0px;top:359.0px;font-size:18.57px;color:#050505;transform:scaleX(0.8902);transform-origin:0 0;">Hamburg</div>
<div class="t" style="left:213.8px;top:411.0px;font-size:17.14px;color:#050505;transform:scaleX(0.8650);transform-origin:0 0;">Mängelmeldungs Nr.</div>
<div class="t" style="left:429.0px;top:411.0px;font-size:17.14px;color:#050505;transform:scaleX(0.863);transform-origin:0 0;">Sicherungsschein Nr.</div>
<div class="t" style="left:644.5px;top:411.0px;font-size:17.14px;color:#050505;transform:scaleX(0.863);transform-origin:0 0;">Freischaltung Nr.</div>
<div class="t" style="left:859.8px;top:411.0px;font-size:17.14px;color:#050505;transform:scaleX(0.863);transform-origin:0 0;">Befahrerlaubnis Nr.</div>
<div class="t" style="left:1075.0px;top:411.0px;font-size:17.14px;color:#050505;transform:scaleX(0.863);transform-origin:0 0;">Linie</div>
<div class="t" style="left:213.8px;top:433.5px;font-size:18.57px;color:#050505;transform:scaleX(0.9052);transform-origin:0 0;">MM-2025-0005</div>
<div class="t" style="left:1075.0px;top:433.5px;font-size:18.57px;color:#050505;transform:scaleX(0.9);transform-origin:0 0;">1</div>
<div class="t" style="left:213.9px;top:478.6px;font-size:17.14px;color:#050505;transform:scaleX(0.8449);transform-origin:0 0;">Anlage</div>
<div class="t" style="left:213.9px;top:501.6px;font-size:18.57px;color:#050505;transform:scaleX(0.9033);transform-origin:0 0;">0LAC10AP010</div>
<div class="t" style="left:752.0px;top:478.6px;font-size:17.14px;color:#050505;transform:scaleX(0.863);transform-origin:0 0;">Bezeichnung</div>
<div class="t" style="left:752.0px;top:501.6px;font-size:18.57px;color:#050505;transform:scaleX(0.9);transform-origin:0 0;">E-Speisewasserpumpe 1</div>
<div class="t" style="left:213.9px;top:533.3px;font-size:17.14px;color:#050505;transform:scaleX(0.863);transform-origin:0 0;">Klasse</div>
<div class="t" style="left:752.0px;top:533.3px;font-size:17.14px;color:#050505;transform:scaleX(0.863);transform-origin:0 0;">Ort</div>
<div class="t" style="left:213.8px;top:642.4px;font-size:17.14px;color:#050505;transform:scaleX(0.8599);transform-origin:0 0;">Mitgeltende Unterlagen zusätzlich zu o.g. Sicherungsschein, Freischaltschein, Erlaubnisschein</div>
<div class="t" style="left:213.8px;top:696.5px;font-size:17.14px;color:#050505;transform:scaleX(0.8628);transform-origin:0 0;">Auszuführende Arbeiten:</div>
<div class="t" style="left:213.8px;top:719.1px;font-size:18.57px;color:#050505;transform:scaleX(0.9079);transform-origin:0 0;">Hier ist zu beschreiben, welche Arbeiten ausgeführt werden sollen.</div>
<div class="t" style="left:213.8px;top:783.2px;font-size:17.14px;color:#050505;transform:scaleX(0.8554);transform-origin:0 0;">Zu beachten:</div>
<div class="t" style="left:213.8px;top:806.0px;font-size:18.57px;color:#050505;transform:scaleX(0.9057);transform-origin:0 0;">Besondere Hinweise können hier notiert werden.</div>
<div class="t" style="left:213.8px;top:885.2px;font-size:21.14px;color:#111;transform:scaleX(0.8972);transform-origin:0 0;">Persönliche Schutzausrüstung: Sicht- und Funktionsprüfung durchgeführt (Aufsichtsführende Person)</div>
<div class="a" style="left:1182.0px;top:883.3px;width:31.0px;height:27.7px;border:2px solid #111"></div>
<svg class="a" style="left:1176.0px;top:877.0px;" width="44" height="40" viewBox="0 0 44 40"><path d="M12.8 22.6Q13.6 20.9 15.3 20.6L17.8 25.1Q21.5 15 28.2 8.8Q29.2 8.6 29.7 9.3Q23 17.5 18.5 31H16.8Z" fill="#000"/></svg>
<div class="t" style="left:213.8px;top:925.8px;font-size:17.14px;color:#050505;transform:scaleX(0.8575);transform-origin:0 0;">Atemschutz</div>
<div class="t" style="left:213.8px;top:948.2px;font-size:18.57px;color:#050505;transform:scaleX(0.9086);transform-origin:0 0;">Staubmaske P3 Aktivkohle</div>
<div class="t" style="left:572.5px;top:925.8px;font-size:17.14px;color:#050505;transform:scaleX(0.863);transform-origin:0 0;">Schutzkleidung</div>
<div class="t" style="left:572.5px;top:948.2px;font-size:18.57px;color:#050505;transform:scaleX(0.9);transform-origin:0 0;">Einwegoverall Typ 5,6</div>
<div class="t" style="left:931.5px;top:925.8px;font-size:17.14px;color:#050505;transform:scaleX(0.863);transform-origin:0 0;">Handschutz</div>
<div class="t" style="left:931.5px;top:948.2px;font-size:18.57px;color:#050505;transform:scaleX(0.9);transform-origin:0 0;">Lederhandschuhe</div>
<div class="t" style="left:213.8px;top:979.4px;font-size:17.14px;color:#050505;transform:scaleX(0.863);transform-origin:0 0;">Augenschutz</div>
<div class="t" style="left:213.8px;top:1002.0px;font-size:18.57px;color:#050505;transform:scaleX(0.9);transform-origin:0 0;">Schutzbrille</div>
<div class="t" style="left:572.5px;top:979.4px;font-size:17.14px;color:#050505;transform:scaleX(0.863);transform-origin:0 0;">Gesichtschutz</div>
<div class="t" style="left:572.5px;top:1002.0px;font-size:18.57px;color:#050505;transform:scaleX(0.9);transform-origin:0 0;">Visier oder Schutzschirm</div>
<div class="t" style="left:931.5px;top:979.4px;font-size:17.14px;color:#050505;transform:scaleX(0.863);transform-origin:0 0;">Gehörschutz</div>
<div class="t" style="left:931.5px;top:1002.0px;font-size:18.57px;color:#050505;transform:scaleX(0.9);transform-origin:0 0;">In-Ear (Stöpsel) / Ohr-Kapseln</div>
<div class="a" style="left:0.0px;top:1005.5px;width:1380.0px;height:27.0px;background:#efefef"></div>
<div class="a" style="left:0.0px;top:1005.5px;width:88.0px;height:27.0px;background:#f8f8f8"></div>
<div class="a" style="left:88.0px;top:1005.5px;width:159.5px;height:27.0px;background:#e2e2e2"></div>
<div class="a" style="left:1341.0px;top:1005.5px;width:39.0px;height:27.0px;background:#f7f7f7"></div>
<div class="a" style="left:272.0px;top:1016.0px;width:1043.0px;height:5.0px;background:#8c8c8c;border-radius:3px"></div>
<div class="t" style="left:116.0px;top:1008.7px;font-size:17.43px;color:#111;transform:scaleX(0.9417);transform-origin:0 0;">210 x 297 mm</div>
<div class="a" style="left:1342.0px;top:200.0px;width:38.0px;height:805.5px;background:#efefef"></div>
<div class="a" style="left:1351.5px;top:227.0px;width:3.8px;height:100.0px;background:#8a8a8a;border-radius:2px"></div>
</div>

<div class="a" style="left:863.5px;top:189px;width:1380px;height:1033px;border-radius:9px 0 0 9px;border-left:1.3px solid #a2a2a2;border-bottom:1.6px solid #9a9a9a"></div>
<div class="a" style="left:2228.5px;top:313px;width:1.2px;height:908px;background:#bdbdbd"></div><div class="a" style="left:2229.7px;top:313px;width:2.3px;height:908px;background:#fff"></div>
<!-- horizontal app scrollbar -->
<div class="a" style="left:376px;top:1259px;width:1870px;height:14px;background:linear-gradient(90deg,#8b8b8b,#858585 40%,#808080);border-radius:7px"></div>
<svg class="a" style="left:359px;top:1260px" width="10" height="13"><path d="M9 0.5v12L1 6.5z" fill="#8a8a8a"/></svg>

<!-- tree -->
<div class="a" style="left:497px;top:396px;width:0;height:119px;border-left:1px dotted #c8c8c8"></div>
<div class="a" style="left:514px;top:438px;width:0;height:14px;border-left:1px dotted #c8c8c8"></div>
<div class="a" style="left:497px;top:408px;width:10px;height:0;border-top:1px dotted #c8c8c8"></div>
<div class="a" style="left:514px;top:451px;width:10px;height:0;border-top:1px dotted #c8c8c8"></div>
<svg class="a" style="left:473px;top:380px" width="10" height="10"><use href="#minus"/></svg>
<svg class="a" style="left:488px;top:377px" width="17" height="14"><use href="#folder"/></svg>
<div class="t" style="left:506px;top:376px;font-size:18.9px;color:#2d2d2d">Arbeitserlaubnis AE-2025-0005</div>
<svg class="a" style="left:508px;top:399px" width="12" height="15"><use href="#doc"/></svg>
<div class="t" style="left:525px;top:399px;font-size:18.9px;color:#2d2d2d">Historie</div>
<svg class="a" style="left:491px;top:424px" width="10" height="10"><use href="#minus"/></svg>
<svg class="a" style="left:507px;top:421px" width="17" height="14"><use href="#folder"/></svg>
<div class="t" style="left:525px;top:420px;font-size:18.9px;color:#2d2d2d">Mängelmeldung MM-2025-0005</div>
<svg class="a" style="left:526px;top:442px" width="12" height="15"><use href="#doc"/></svg>
<div class="t" style="left:544px;top:441px;font-size:18.9px;color:#2d2d2d">Historie</div>
<svg class="a" style="left:491px;top:466px" width="10" height="10"><use href="#minus"/></svg>
<svg class="a" style="left:507px;top:463px" width="17" height="14"><use href="#folder"/></svg>
<div class="t" style="left:525px;top:462px;font-size:18.9px;color:#2d2d2d">Freischaltung anlegen</div>
<svg class="a" style="left:491px;top:487px" width="10" height="10"><use href="#minus"/></svg>
<svg class="a" style="left:507px;top:484px" width="17" height="14"><use href="#folder"/></svg>
<div class="t" style="left:525px;top:483px;font-size:18.9px;color:#2d2d2d">Behälterbefahrschein anlegen</div>
<svg class="a" style="left:491px;top:508px" width="10" height="10"><use href="#minus"/></svg>
<svg class="a" style="left:507px;top:505px" width="17" height="14"><use href="#folder"/></svg>
<div class="t" style="left:525px;top:504px;font-size:18.9px;color:#2d2d2d">Sicherungsschein anlegen</div>
</div>
</body></html>
